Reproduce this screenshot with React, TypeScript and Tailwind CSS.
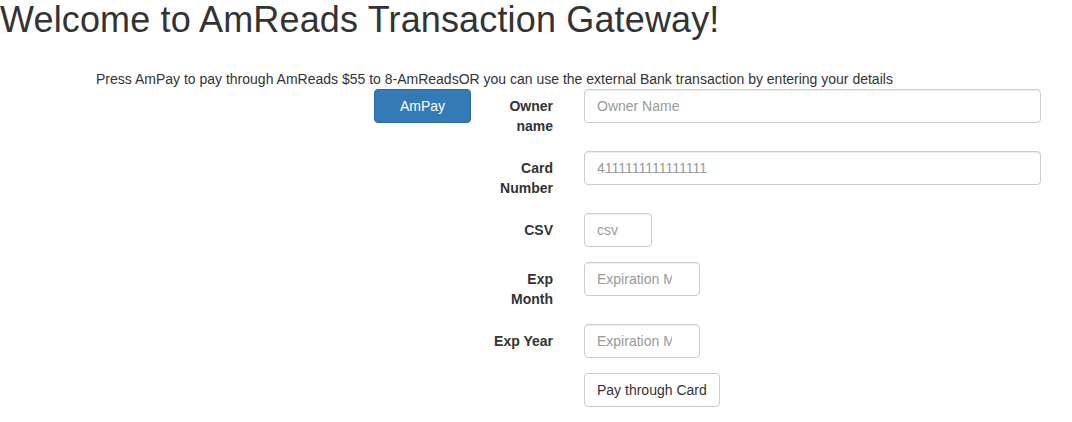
import React from "react";

const inputCls =
  "block h-[34px] rounded-[4px] border border-[#ccc] bg-white px-[12px] py-[6px] text-[14px] leading-[20px] text-[#555] placeholder:text-[#999] shadow-[inset_0_1px_1px_rgba(0,0,0,0.075)] outline-none";

function Row({ label, children }: { label: string; children: React.ReactNode }) {
  return (
    <div className="mb-[15px] flex items-start">
      <label className="ml-[20px] w-[62px] shrink-0 pt-[7px] text-right text-[14px] font-bold leading-[20px] text-[#333]">
        {label}
      </label>
      <div className="ml-[31px] mr-[31px] flex-1">{children}</div>
    </div>
  );
}

export default function App() {
  return (
    <div
      className="min-h-[422px] bg-white text-[14px] leading-[20px] text-[#333]"
      style={{ fontFamily: '"Liberation Sans", Arial, sans-serif' }}
    >
      <h1 className="m-0 text-[36px] font-medium leading-[1.1] tracking-[0.15px] text-[#333]">
        Welcome to AmReads Transaction Gateway!
      </h1>
      <p className="mt-[29px] pl-[96px] text-[14px] leading-[20px]">
        Press AmPay to pay through AmReads $55 to 8-AmReadsOR you can use the external Bank transaction by entering your details
      </p>
      <div className="flex items-start">
        <button className="ml-[374px] h-[34px] w-[97px] shrink-0 rounded-[4px] border border-[#2e6da4] bg-[#337ab7] text-[14px] leading-[20px] text-white">
          AmPay
        </button>
        <div className="flex-1">
          <Row label="Owner name">
            <input className={inputCls + " w-full"} placeholder="Owner Name" />
          </Row>
          <Row label="Card Number">
            <input className={inputCls + " w-full"} placeholder="4111111111111111" />
          </Row>
          <Row label="CSV">
            <input type="number" className={inputCls + " w-[68px]"} placeholder="csv" />
          </Row>
          <Row label="Exp Month">
            <input type="number" className={inputCls + " w-[116px]"} placeholder="Expiration Month" />
          </Row>
          <Row label="Exp Year">
            <input type="number" className={inputCls + " w-[116px]"} placeholder="Expiration Month" />
          </Row>
          <div className="flex">
            <div className="ml-[20px] w-[62px] shrink-0" />
            <div className="ml-[31px]">
              <button className="h-[34px] rounded-[4px] border border-[#ccc] bg-white px-[12px] py-[6px] text-[14px] leading-[20px] text-[#333]">
                Pay through Card
              </button>
            </div>
          </div>
        </div>
      </div>
    </div>
  );
}
